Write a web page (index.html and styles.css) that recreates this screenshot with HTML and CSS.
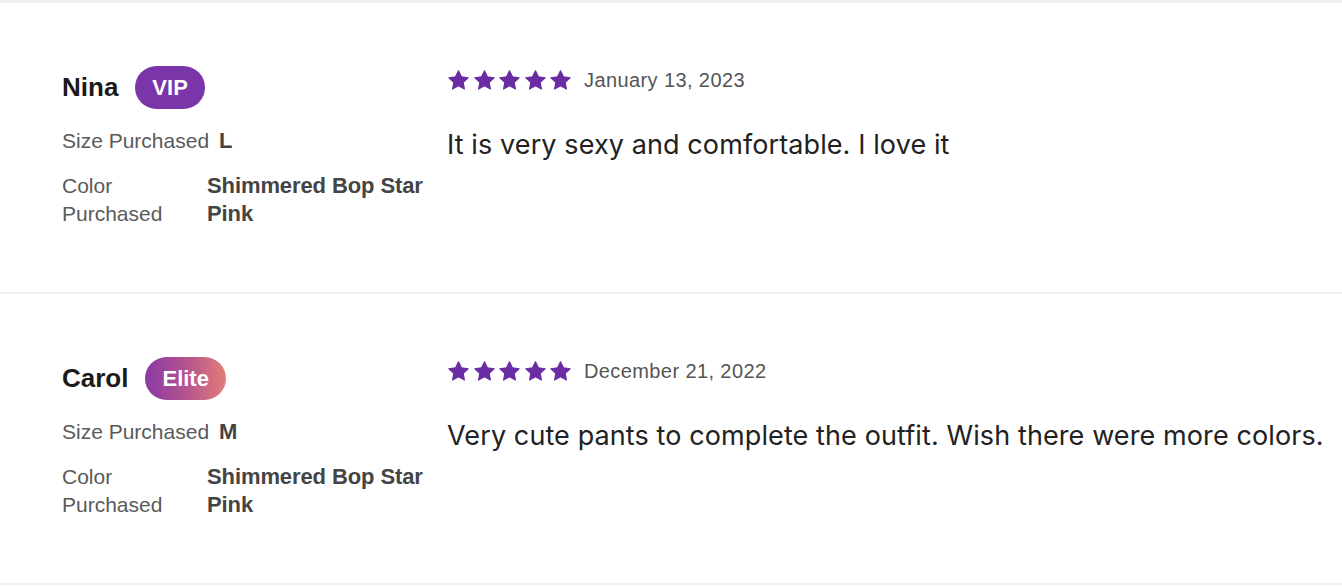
FILE: index.html
```html
<!DOCTYPE html>
<html>
<head>
<meta charset="utf-8">
<link rel="stylesheet" href="styles.css">
</head>
<body>
<svg width="0" height="0" style="position:absolute">
  <defs>
    <symbol id="star" viewBox="0 0 24 24">
      <path d="M12 1.8l3.05 6.4 7 .9-5.15 4.85 1.3 6.95L12 17.5l-6.2 3.4 1.3-6.95L1.95 9.1l7-.9z" fill="currentColor" stroke="currentColor" stroke-width="1.2" stroke-linejoin="round"/>
    </symbol>
  </defs>
</svg>
<div class="reviews">
  <div class="review">
    <div class="reviewer">
      <div class="name-row">
        <span class="name">Nina</span>
        <span class="badge badge-vip">VIP</span>
      </div>
      <div class="size-row">
        <span class="label">Size Purchased</span>
        <span class="value">L</span>
      </div>
      <div class="color-row">
        <span class="label label-col">Color<br>Purchased</span>
        <span class="value">Shimmered Bop Star<br>Pink</span>
      </div>
    </div>
    <div class="content">
      <div class="meta">
        <div class="stars">
          <svg class="star"><use href="#star"/></svg>
          <svg class="star"><use href="#star"/></svg>
          <svg class="star"><use href="#star"/></svg>
          <svg class="star"><use href="#star"/></svg>
          <svg class="star"><use href="#star"/></svg>
        </div>
        <span class="date">January 13, 2023</span>
      </div>
      <p class="text">It is very sexy and comfortable. I love it</p>
    </div>
  </div>
  <div class="review">
    <div class="reviewer">
      <div class="name-row">
        <span class="name">Carol</span>
        <span class="badge badge-elite">Elite</span>
      </div>
      <div class="size-row">
        <span class="label">Size Purchased</span>
        <span class="value">M</span>
      </div>
      <div class="color-row">
        <span class="label label-col">Color<br>Purchased</span>
        <span class="value">Shimmered Bop Star<br>Pink</span>
      </div>
    </div>
    <div class="content">
      <div class="meta">
        <div class="stars">
          <svg class="star"><use href="#star"/></svg>
          <svg class="star"><use href="#star"/></svg>
          <svg class="star"><use href="#star"/></svg>
          <svg class="star"><use href="#star"/></svg>
          <svg class="star"><use href="#star"/></svg>
        </div>
        <span class="date">December 21, 2022</span>
      </div>
      <p class="text">Very cute pants to complete the outfit. Wish there were more colors.</p>
    </div>
  </div>
</div>
</body>
</html>
```

FILE: styles.css
```css
* { box-sizing: border-box; }
body {
  margin: 0;
  background: #fff;
  font-family: "Liberation Sans", Arial, sans-serif;
  color: #222;
}
.reviews {
  border-top: 3px solid #efefef;
}
.review {
  display: flex;
  height: 291px;
  border-bottom: 2px solid #efefef;
  padding-left: 62px;
}
.reviewer {
  width: 385px;
  flex-shrink: 0;
  padding-top: 63px;
}
.name-row {
  display: flex;
  align-items: center;
  gap: 17px;
  height: 43px;
}
.name {
  font-size: 26px;
  font-weight: bold;
  color: #1a1a1a;
}
.badge {
  display: flex;
  align-items: center;
  height: 43px;
  padding: 0 17px;
  border-radius: 22px;
  color: #fff;
  font-size: 22px;
  font-weight: bold;
}
.badge-vip { background: #7a35a8; }
.badge-elite { background: linear-gradient(90deg, #8a3aa6 0%, #b4538f 50%, #e27d78 100%); }
.size-row {
  display: flex;
  gap: 10px;
  margin-top: 18px;
  line-height: 28px;
}
.label {
  font-size: 21px;
  color: #5a5a5a;
}
.value {
  font-size: 22px;
  font-weight: bold;
  color: #444;
  letter-spacing: -0.1px;
}
.color-row {
  display: flex;
  margin-top: 17px;
  line-height: 28px;
}
.label-col {
  width: 145px;
  flex-shrink: 0;
}
.content {
  padding-top: 66px;
}
.meta {
  display: flex;
  align-items: center;
  height: 22px;
}
.stars {
  display: flex;
  gap: 2.5px;
}
.star {
  width: 23px;
  height: 23px;
  color: #6a2ca3;
}
.date {
  margin-left: 12px;
  font-size: 20px;
  color: #555;
  letter-spacing: 0.4px;
}
.text {
  margin: 38px 0 0;
  font-family: Inter, "Liberation Sans", sans-serif;
  font-size: 27px;
  line-height: 32px;
  color: #222;
  letter-spacing: 0.1px;
}
```
